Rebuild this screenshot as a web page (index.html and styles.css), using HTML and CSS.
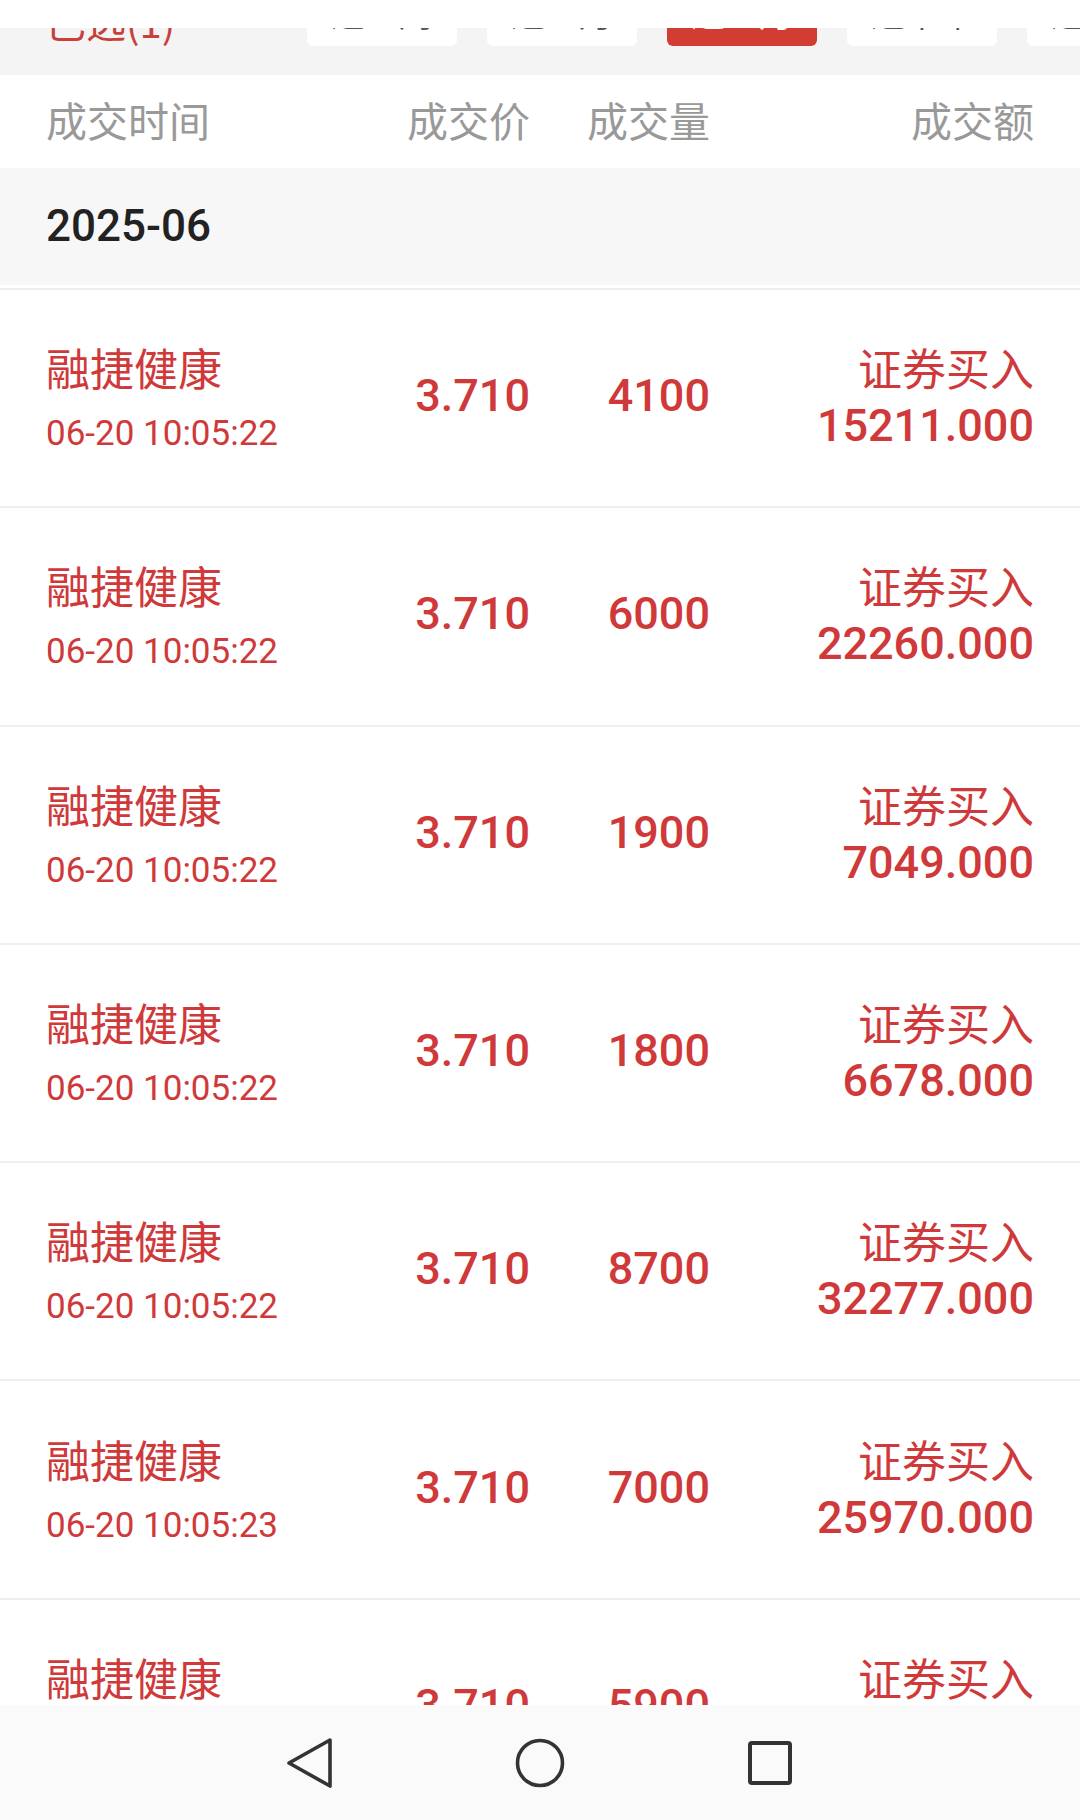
FILE: index.html
```html
<!DOCTYPE html>
<html lang="zh-CN">

<head>
    <meta charset="UTF-8">
    <meta name="viewport" content="width=device-width, initial-scale=1.0">
    <title>成交明细</title>
    <link rel="stylesheet" href="styles.css">
</head>

<body>
    <div class="screen">
        <div class="status"></div>

        <div class="filter">
            <div class="filter-row">
                <span class="picked">已选(1)</span>
                <span class="tab">近一周</span>
                <span class="tab">近一月</span>
                <span class="tab active">近三月</span>
                <span class="tab">近半年</span>
                <span class="tab">近一年</span>
            </div>
        </div>

        <div class="list">
            <div class="thead">
                <span>成交时间</span>
                <span class="num">成交价</span>
                <span class="num">成交量</span>
                <span class="num">成交额</span>
            </div>

            <div class="month">2025-06</div>

            <div class="row">
                <div class="stack">
                    <span class="name">融捷健康</span>
                    <span class="time">06-20 10:05:22</span>
                </div>
                <span class="num big">3.710</span>
                <span class="num big">4100</span>
                <div class="stack num">
                    <span class="name">证券买入</span>
                    <span class="amount">15211.000</span>
                </div>
            </div>

            <div class="row">
                <div class="stack">
                    <span class="name">融捷健康</span>
                    <span class="time">06-20 10:05:22</span>
                </div>
                <span class="num big">3.710</span>
                <span class="num big">6000</span>
                <div class="stack num">
                    <span class="name">证券买入</span>
                    <span class="amount">22260.000</span>
                </div>
            </div>

            <div class="row">
                <div class="stack">
                    <span class="name">融捷健康</span>
                    <span class="time">06-20 10:05:22</span>
                </div>
                <span class="num big">3.710</span>
                <span class="num big">1900</span>
                <div class="stack num">
                    <span class="name">证券买入</span>
                    <span class="amount">7049.000</span>
                </div>
            </div>

            <div class="row">
                <div class="stack">
                    <span class="name">融捷健康</span>
                    <span class="time">06-20 10:05:22</span>
                </div>
                <span class="num big">3.710</span>
                <span class="num big">1800</span>
                <div class="stack num">
                    <span class="name">证券买入</span>
                    <span class="amount">6678.000</span>
                </div>
            </div>

            <div class="row">
                <div class="stack">
                    <span class="name">融捷健康</span>
                    <span class="time">06-20 10:05:22</span>
                </div>
                <span class="num big">3.710</span>
                <span class="num big">8700</span>
                <div class="stack num">
                    <span class="name">证券买入</span>
                    <span class="amount">32277.000</span>
                </div>
            </div>

            <div class="row">
                <div class="stack">
                    <span class="name">融捷健康</span>
                    <span class="time">06-20 10:05:23</span>
                </div>
                <span class="num big">3.710</span>
                <span class="num big">7000</span>
                <div class="stack num">
                    <span class="name">证券买入</span>
                    <span class="amount">25970.000</span>
                </div>
            </div>

            <div class="row">
                <div class="stack">
                    <span class="name">融捷健康</span>
                    <span class="time">06-20 10:05:23</span>
                </div>
                <span class="num big">3.710</span>
                <span class="num big">5900</span>
                <div class="stack num">
                    <span class="name">证券买入</span>
                    <span class="amount">21889.000</span>
                </div>
            </div>
        </div>

        <div class="navbar">
            <span class="nav-btn">
                <svg width="48" height="52" viewBox="0 0 48 52">
                    <path d="M44 3 L3 26 L44 49 Z" fill="none" stroke="#333" stroke-width="3.6" stroke-linejoin="round" />
                </svg>
            </span>
            <span class="nav-btn">
                <svg width="52" height="52" viewBox="0 0 52 52">
                    <circle cx="26" cy="26" r="22.5" fill="none" stroke="#333" stroke-width="3.6" />
                </svg>
            </span>
            <span class="nav-btn">
                <svg width="48" height="48" viewBox="0 0 48 48">
                    <rect x="4" y="4" width="40" height="40" rx="2" fill="none" stroke="#333" stroke-width="4" />
                </svg>
            </span>
        </div>
    </div>
</body>

</html>
```

FILE: styles.css
```css
body {
    margin: 0;
    padding: 0;
    background: #fff;
    font-family: Roboto, "Noto Sans CJK SC", sans-serif;
}

.screen {
    width: 1080px;
    height: 1820px;
    display: flex;
    flex-direction: column;
    overflow: hidden;
}

.status {
    height: 28px;
    flex: 0 0 28px;
    background: #fff;
}

.filter {
    height: 47px;
    flex: 0 0 47px;
    background: #f4f4f4;
    overflow: hidden;
}

.filter-row {
    display: flex;
    margin-top: -32px;
    padding-left: 46px;
}

.picked {
    flex: 0 0 261px;
    height: 50px;
    line-height: 50px;
    font-family: "Noto Sans CJK SC", sans-serif;
    font-size: 40px;
    color: #c8403a;
}

.tab {
    flex: 0 0 150px;
    height: 50px;
    margin-right: 30px;
    line-height: 34px;
    text-align: center;
    font-family: "Noto Sans CJK SC", sans-serif;
    font-size: 34px;
    color: #555;
    background: #fff;
    border-radius: 6px;
}

.tab.active {
    background: #d13d33;
    color: #fff;
}

.list {
    flex: 1;
    overflow: hidden;
}

.thead,
.row {
    display: grid;
    grid-template-columns: 304px 180px 180px 1fr;
    align-items: center;
    padding: 0 46px;
}

.thead {
    height: 93px;
    box-sizing: border-box;
    padding-bottom: 6px;
    font-family: "Noto Sans CJK SC", sans-serif;
    font-size: 41px;
    color: #999;
}

.num {
    text-align: right;
}

.month {
    height: 117px;
    margin-bottom: 3px;
    padding-left: 46px;
    line-height: 117px;
    background: #f7f7f7;
    font-size: 44px;
    font-weight: 500;
    color: #222;
}

.row {
    height: 218.3px;
    box-sizing: border-box;
    border-top: 2px solid #efefef;
    color: #d0393a;
}

.stack {
    display: flex;
    flex-direction: column;
}

.stack.num {
    align-items: flex-end;
    padding-bottom: 8px;
}

.name {
    line-height: 60px;
    font-family: "Noto Sans CJK SC", sans-serif;
    font-size: 44px;
}

.time {
    margin-top: 12px;
    line-height: 50px;
    font-size: 35px;
}

.big {
    padding-bottom: 5px;
    font-size: 45px;
    font-weight: 500;
}

.amount {
    margin-top: 4px;
    line-height: 50px;
    font-size: 45px;
    font-weight: 500;
}

.navbar {
    height: 115px;
    flex: 0 0 115px;
    background: #fafafa;
    display: flex;
    justify-content: center;
    align-items: center;
}

.nav-btn {
    width: 230px;
    display: flex;
    justify-content: center;
    align-items: center;
}

.nav-btn svg {
    display: block;
}
```
